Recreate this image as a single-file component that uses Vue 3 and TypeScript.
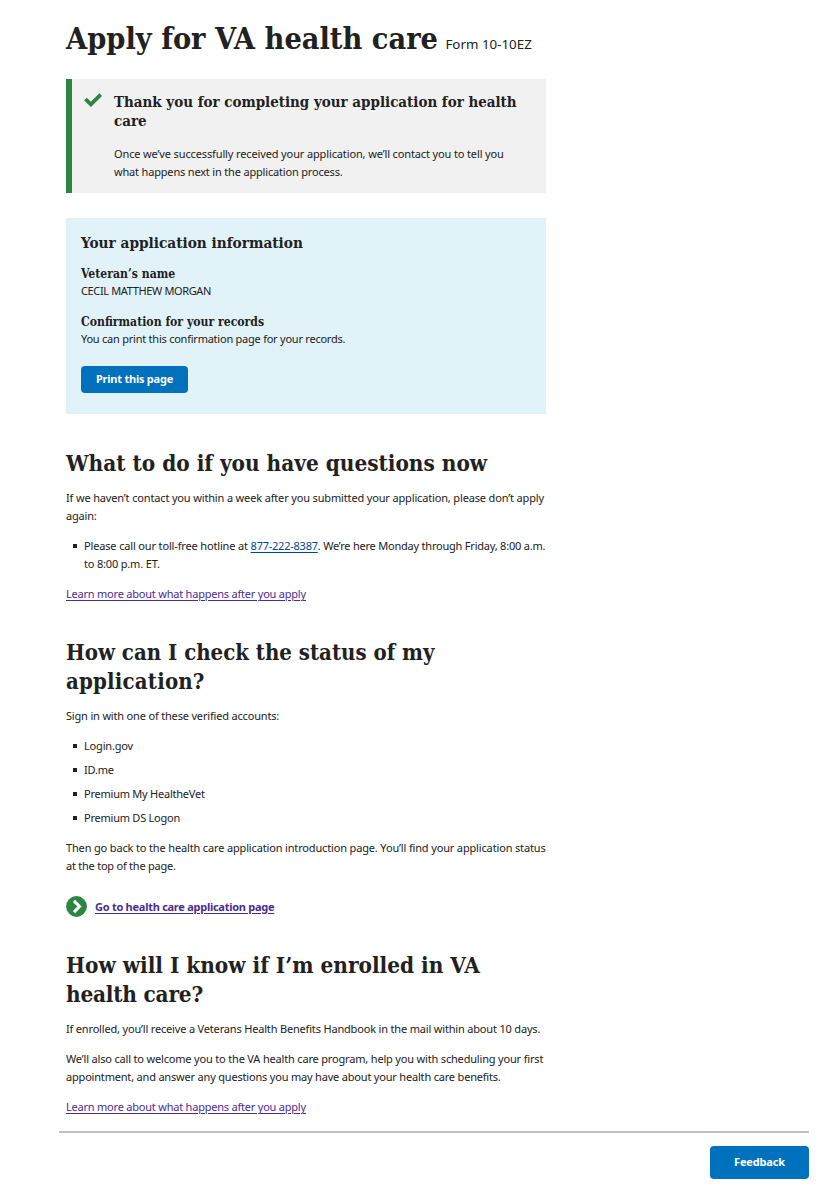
<script setup lang="ts">
const accounts = [
  { name: 'Login.gov', tight: false },
  { name: 'ID.me', tight: false },
  { name: 'Premium My HealtheVet', tight: true },
  { name: 'Premium DS Logon', tight: true },
]

function printPage(): void {
  window.print()
}
</script>

<template>
  <div class="page">
    <main class="content">
      <h1>Apply for VA health care <span class="form-number">Form 10-10EZ</span></h1>

      <section class="alert">
        <svg class="check" width="18" height="14" viewBox="0 0 18 14" aria-hidden="true">
          <path d="M1.4 6 6.9 11.4 16.7 1.6" fill="none" stroke="#2e8540" stroke-width="3.8" stroke-linejoin="miter" />
        </svg>
        <div class="alert-body">
          <h3>Thank you for completing your application for health<br />care</h3>
          <p><span class="loose">Once we’ve successfully received your application, we’ll contact you to tell you</span><br />what happens next in the application process.</p>
        </div>
      </section>

      <section class="info">
        <h3>Your application information</h3>
        <h4>Veteran’s name</h4>
        <p class="caps">CECIL MATTHEW MORGAN</p>
        <h4 class="second">Confirmation for your records</h4>
        <p class="tight">You can print this confirmation page for your records.</p>
        <button class="btn print" type="button" @click="printPage">Print this page</button>
      </section>

      <h2>What to do if you have questions now</h2>
      <p><span class="loose2">If we haven’t contact you within a week after you submitted your application, please don’t apply</span><br />again:</p>
      <ul>
        <li><span class="loose2">Please call our toll-free hotline at </span><a class="phone tight" href="#">877-222-8387</a><span class="mid">. We’re here Monday through Friday, 8:00 a.m.</span><br />to 8:00 p.m. ET.</li>
      </ul>
      <p><a class="mid" href="#">Learn more about what happens after you apply</a></p>

      <h2 class="narrow">How can I check the status of my<br /><span class="grow">application?</span></h2>
      <p>Sign in with one of these verified accounts:</p>
      <ul>
        <li v-for="account in accounts" :key="account.name" :class="{ tight: account.tight }">{{ account.name }}</li>
      </ul>
      <p><span class="loose2">Then go back to the health care application introduction page. You’ll find your application status</span><br /><span class="tight">at the top of the page.</span></p>

      <div class="action">
        <svg width="21" height="21" viewBox="0 0 21 21" aria-hidden="true">
          <circle cx="10.5" cy="10.5" r="10.4" fill="#2e8540" />
          <path d="m8 4.9 5.5 5.6L8 16.1" fill="none" stroke="#fff" stroke-width="3.1" />
        </svg>
        <a href="#">Go to health care application page</a>
      </div>

      <h2>How will I know if I’m enrolled in VA<br /><span class="shrink">health care?</span></h2>
      <p>If enrolled, you’ll receive a Veterans Health Benefits Handbook in the mail within about 10 days.</p>
      <p>We’ll also call to welcome you to the VA health care program, help you with scheduling your first<br /><span class="slight">appointment, and answer any questions you may have about your health care benefits.</span></p>
      <p><a class="mid" href="#">Learn more about what happens after you apply</a></p>
    </main>

    <footer>
      <button class="btn feedback" type="button">Feedback</button>
    </footer>
  </div>
</template>

<style>
body {
  background: #fff;
}
</style>

<style scoped>
.page {
  width: 832px;
  height: 1203px;
  box-sizing: border-box;
  padding-top: 19px;
  overflow: hidden;
  color: #212121;
  font-family: "Noto Sans", "Open Sans", sans-serif;
  font-size: 11px;
  line-height: 18px;
  letter-spacing: -0.176px;
  white-space: nowrap;
}
.content {
  width: 480px;
  margin-left: 66px;
}
h1, h2, h3, h4 {
  margin: 0;
  font-family: "DejaVu Serif Condensed", "DejaVu Serif", serif;
  font-stretch: condensed;
  font-weight: 700;
  letter-spacing: 0;
}
h1 {
  font-size: 30.36px;
  line-height: 38px;
  height: 38px;
}
.form-number {
  margin-left: -2px;
  font-family: "Noto Sans", "Open Sans", sans-serif;
  font-stretch: normal;
  font-size: 13.35px;
  font-weight: 400;
}
h2 {
  margin-top: 35px;
  font-size: 22.35px;
  line-height: 29px;
}
h2.narrow {
  font-size: 22px;
}
h2 + p {
  margin-top: 11px;
}
.grow {
  letter-spacing: 0.2px;
}
.shrink {
  letter-spacing: -0.2px;
}
h3 {
  font-size: 14.98px;
  line-height: 19px;
}
h4 {
  font-size: 12.14px;
  line-height: 17px;
}
p {
  margin: 12px 0 0;
}
.alert {
  display: flex;
  height: 114px;
  margin-top: 22px;
  box-sizing: border-box;
  padding: 14px 0 0 12px;
  border-left: 6px solid #2e8540;
  background: #f1f1f1;
}
.check {
  flex: none;
}
.alert-body {
  margin-left: 12px;
}
.alert-body p {
  margin-top: 14px;
}
.info {
  height: 196px;
  margin: 25px 0 35px;
  box-sizing: border-box;
  padding: 15px;
  background: #e1f3f8;
}
.info h3 {
  font-size: 15.23px;
  line-height: 20px;
}
.info h4 {
  margin-top: 13px;
}
.info h4.second {
  margin-top: 14px;
}
.info p {
  margin: -1px 0 0;
}
ul {
  margin: 12px 0 0;
  padding: 0 0 0 18px;
  list-style: none;
}
li {
  position: relative;
}
li::before {
  content: "";
  position: absolute;
  left: -11px;
  top: 7px;
  width: 4px;
  height: 4px;
  background: #212121;
}
li + li {
  margin-top: 6px;
}
.loose {
  letter-spacing: -0.13px;
}
.loose2 {
  letter-spacing: -0.153px;
}
.slight {
  letter-spacing: -0.19px;
}
.mid {
  letter-spacing: -0.215px;
}
.tight {
  letter-spacing: -0.235px;
}
.caps {
  letter-spacing: -0.36px;
}
a {
  color: #4c2c92;
  text-decoration: underline;
  text-decoration-thickness: 1px;
  text-underline-offset: 2px;
}
.phone {
  color: #004795;
}
.action {
  display: flex;
  align-items: center;
  gap: 8px;
  height: 21px;
  margin-top: 21px;
}
.action a {
  font-weight: 700;
  letter-spacing: -0.265px;
}
.action + h2 {
  margin-top: 34px;
}
.btn {
  display: block;
  padding: 0 0 2px;
  border: 0;
  border-radius: 4px;
  background: #0071bc;
  color: #fff;
  font: 700 11px/18px "Noto Sans", "Open Sans", sans-serif;
  text-align: center;
}
.print {
  width: 107px;
  height: 27px;
  margin-top: 18px;
  letter-spacing: -0.233px;
}
footer {
  display: flex;
  justify-content: flex-end;
  width: 750px;
  margin: 15px 0 0 59px;
  padding-top: 13px;
  border-top: 2px solid #bfbfc6;
}
.feedback {
  width: 99px;
  height: 33px;
  letter-spacing: -0.15px;
}
</style>
